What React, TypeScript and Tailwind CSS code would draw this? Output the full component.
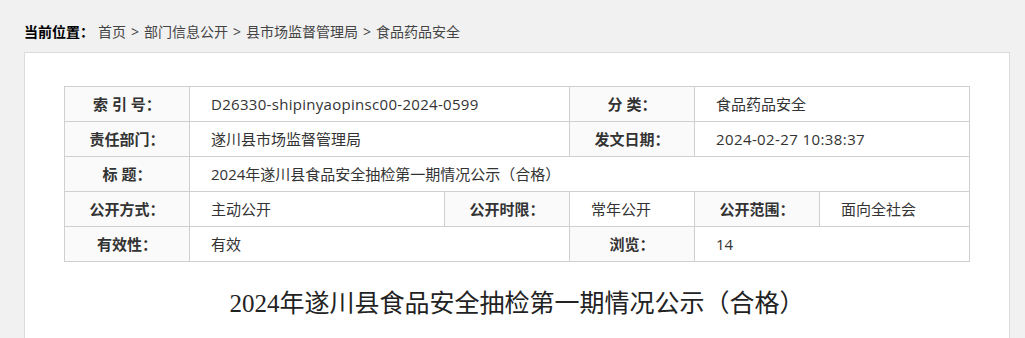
import React from "react";

const label = "border border-[#cfcfcf] bg-[#fafafa] text-center font-bold text-[#333]";
const value = "border border-[#cfcfcf] bg-white pl-[21px] text-left text-[#333]";

export default function App() {
  return (
    <div className="min-h-[338px] bg-[#f1f1f1] font-['Open_Sans','Noto_Sans_CJK_SC',sans-serif]">
      <div className="pl-[24px] pt-[22px] pb-[10px] text-[14px] leading-[20px] text-[#444]">
        <span className="font-bold text-black">当前位置：</span>
        <span className="ml-[4px]">首页</span>
        <span className="mx-[5px]">&gt;</span>
        <span>部门信息公开</span>
        <span className="mx-[5px]">&gt;</span>
        <span>县市场监督管理局</span>
        <span className="mx-[5px]">&gt;</span>
        <span>食品药品安全</span>
      </div>

      <div className="ml-[24px] w-[986px] border border-[#dcdcdc] bg-white pt-[33px] pb-[20px]">
        <table className="mx-auto w-[905px] table-fixed border-collapse text-[15px]">
          <colgroup>
            <col className="w-[125px]" />
            <col className="w-[255px]" />
            <col className="w-[125px]" />
            <col className="w-[125px]" />
            <col className="w-[125px]" />
            <col className="w-[150px]" />
          </colgroup>
          <tbody>
            <tr className="h-[35px]">
              <td className={label}>索 引 号：</td>
              <td className={value} colSpan={2}>
                <span className="tracking-[0.3px]">D26330-shipinyaopinsc00-2024-0599</span>
              </td>
              <td className={label}>分 类：</td>
              <td className={value} colSpan={2}>
                食品药品安全
              </td>
            </tr>
            <tr className="h-[35px]">
              <td className={label}>责任部门：</td>
              <td className={value} colSpan={2}>
                遂川县市场监督管理局
              </td>
              <td className={label}>发文日期：</td>
              <td className={value} colSpan={2}>
                <span className="tracking-[0.4px]">2024-02-27 10:38:37</span>
              </td>
            </tr>
            <tr className="h-[35px]">
              <td className={label}>标 题：</td>
              <td className={value} colSpan={5}>
                2024年遂川县食品安全抽检第一期情况公示（合格）
              </td>
            </tr>
            <tr className="h-[35px]">
              <td className={label}>公开方式：</td>
              <td className={value}>主动公开</td>
              <td className={label}>公开时限：</td>
              <td className={value}>常年公开</td>
              <td className={label}>公开范围：</td>
              <td className={value}>面向全社会</td>
            </tr>
            <tr className="h-[35px]">
              <td className={label}>有效性：</td>
              <td className={value} colSpan={2}>
                有效
              </td>
              <td className={label}>浏览：</td>
              <td className={value} colSpan={2}>
                14
              </td>
            </tr>
          </tbody>
        </table>

        <h1 className="mt-[27px] text-center font-['Liberation_Serif','Noto_Sans_CJK_SC',serif] text-[25px] leading-[30px] text-[#222]">
          2024年遂川县食品安全抽检第一期情况公示（合格）
        </h1>
      </div>
    </div>
  );
}
